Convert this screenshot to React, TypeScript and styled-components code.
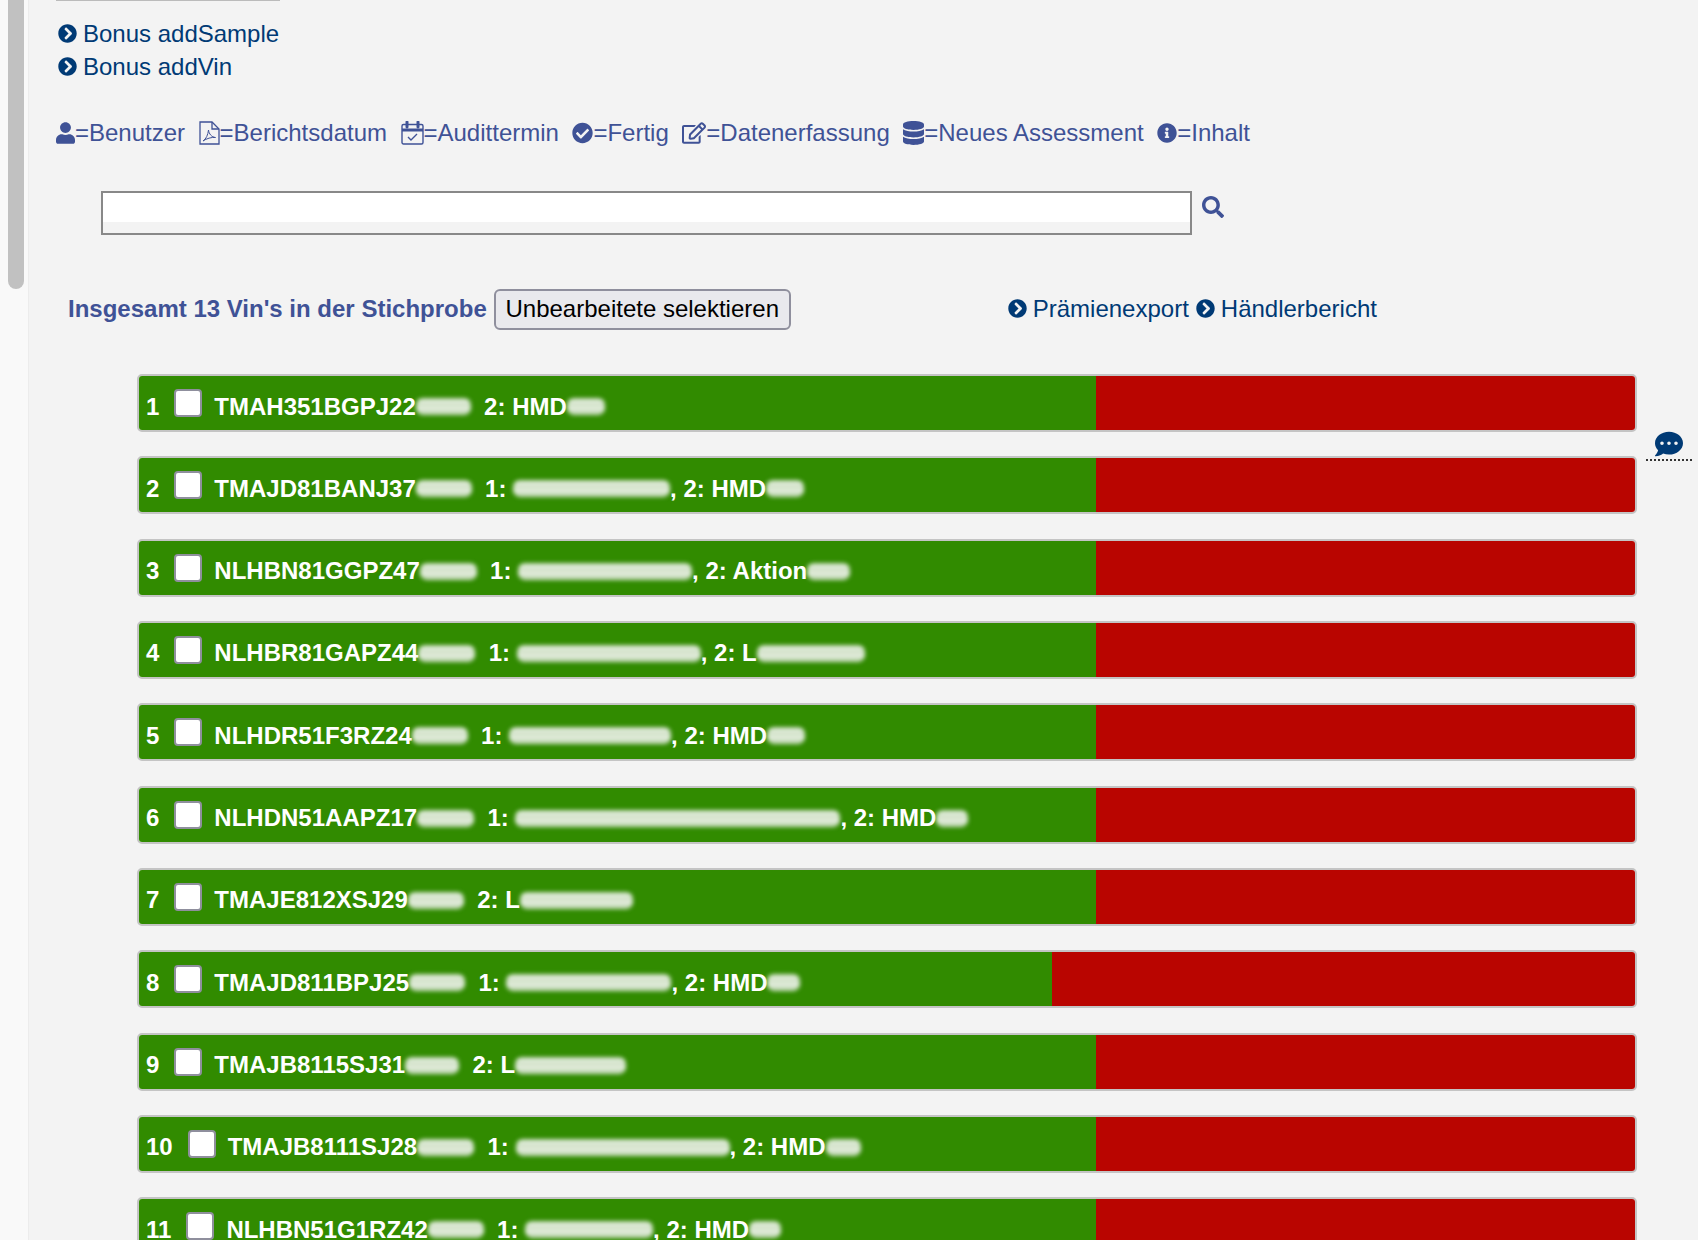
import React from "react";
import styled, { createGlobalStyle } from "styled-components";
import {
  FaChevronCircleRight,
  FaUser,
  FaCheckCircle,
  FaRegEdit,
  FaDatabase,
  FaInfoCircle,
  FaSearch,
  FaCommentDots,
} from "react-icons/fa";

const GlobalStyle = createGlobalStyle`
  html, body {
    margin: 0;
    height: 100%;
    overflow: hidden;
    background: #f3f3f3;
    font-family: "Liberation Sans", Arial, sans-serif;
  }
`;

const Page = styled.div`
  display: flex;
  height: 1240px;
  overflow: hidden;
  position: relative;
`;

const ScrollTrack = styled.div`
  flex: 0 0 29px;
  box-sizing: border-box;
  padding-left: 8px;
  background: #f9f9f9;
  border-right: 1px solid #ececec;
`;

const ScrollThumb = styled.div`
  width: 16px;
  height: 289px;
  background: #c1c1c1;
  border-radius: 0 0 8px 8px;
`;

const Main = styled.main`
  flex: 1;
  min-width: 0;
`;

const TopRule = styled.div`
  width: 224px;
  height: 1px;
  margin-left: 27px;
  background: #bbb;
`;

const LinkList = styled.div`
  margin: 16px 0 0 29px;
`;

const BlueLink = styled.a`
  display: inline-flex;
  align-items: center;
  gap: 6px;
  color: #003a75;
  font-size: 24px;
  line-height: 33px;
  white-space: nowrap;

  svg {
    width: 19px;
    height: 19px;
  }
`;

const LinkRow = styled.div`
  height: 33px;
`;

const Legend = styled.div`
  display: flex;
  gap: 13.5px;
  margin: 33px 0 0 27px;
  color: #3f5296;
  font-size: 24px;
  line-height: 33px;
`;

const LegendItem = styled.span`
  display: inline-flex;
  align-items: center;
  white-space: nowrap;
`;

const LegendIcon = styled.span<{ $w: number }>`
  display: inline-flex;
  justify-content: center;
  width: ${(p) => p.$w}px;

  svg {
    width: ${(p) => p.$w}px;
    height: 24px;
  }
`;

const SearchRow = styled.div`
  display: flex;
  margin: 42px 0 0 72px;
`;

const SearchBox = styled.div`
  width: 1091px;
  height: 44px;
  box-sizing: border-box;
  border: 2px solid #888;
`;

const SearchInput = styled.input`
  display: block;
  width: 100%;
  height: 29px;
  box-sizing: border-box;
  border: 0;
  padding: 0;
  background: #fff;
`;

const SearchIcon = styled(FaSearch)`
  width: 22px;
  height: 22px;
  margin: 5px 0 0 10px;
  color: #3f5296;
`;

const SummaryRow = styled.div`
  display: flex;
  align-items: center;
  height: 41px;
  margin: 54px 0 0 39px;
`;

const Total = styled.strong`
  padding-bottom: 2px;
  color: #3f5296;
  font-size: 24px;
  white-space: nowrap;
`;

const SelectButton = styled.button`
  width: 297px;
  height: 41px;
  margin-left: 7px;
  box-sizing: border-box;
  padding: 0 0 2px;
  border: 2px solid #8f8f9d;
  border-radius: 6px;
  background: #e9e9ed;
  color: #000;
  font: 24px "Liberation Sans", Arial, sans-serif;
`;

const ExportLinks = styled.div`
  display: flex;
  gap: 7px;
  margin-left: 217px;
  padding-bottom: 2px;
`;

const RowList = styled.div`
  margin: 44px 0 0 108px;
  width: 1500px;
`;

const Row = styled.div`
  display: flex;
  height: 58px;
  margin-bottom: 24.33px;
  box-sizing: border-box;
  border: 2px solid #c4c4c4;
  border-radius: 5px;
  overflow: hidden;
`;

const Done = styled.div<{ $pct: number }>`
  display: flex;
  align-items: center;
  flex: 0 0 ${(p) => p.$pct}%;
  box-sizing: border-box;
  padding-left: 7px;
  background: #318b00;
  color: #fff;
  font-size: 24px;
  font-weight: 700;
  white-space: nowrap;
`;

const Open = styled.div`
  flex: 1;
  background: #b90500;
`;

const RowNumber = styled.span`
  padding-top: 7px;
`;

const RowCheck = styled.span`
  display: block;
  flex: none;
  width: 28px;
  height: 28px;
  margin: 0 12px 0 15px;
  box-sizing: border-box;
  border: 2px solid #8f8f9d;
  border-radius: 4px;
  background: #fff;
`;

const RowText = styled.span`
  display: inline-flex;
  align-items: center;
  padding-top: 7px;
  white-space: pre;
`;

const Smudge = styled.span<{ $w: number }>`
  display: inline-block;
  width: ${(p) => p.$w}px;
  height: 17px;
  border-radius: 7px;
  background: linear-gradient(
    #b7d1a8 0,
    #eef4ea 22%,
    #c4d9b8 40%,
    #f0f5ec 62%,
    #bdd4af 82%,
    #d8e6cf 100%
  );
  filter: blur(2.2px);
`;

const CommentMark = styled.div`
  position: absolute;
  left: 1646px;
  top: 430px;
  width: 46px;
  height: 29px;
  border-bottom: 2px dotted #333;
  text-align: center;
  color: #003a75;

  svg {
    width: 32px;
    height: 28px;
  }
`;

const PdfIcon = () => (
  <svg viewBox="0 0 21 24" fill="none" stroke="currentColor" strokeWidth="1.3">
    <path d="M1 1h12l7 7v15H1z" />
    <path d="M13 1v7h7" />
    <path d="M4 20c3-2 5-6 5.5-11 .5 4 3 7 7 7.500-4-.5-9 1-12.500 3.500z" strokeWidth="1" />
  </svg>
);

const CalendarIcon = () => (
  <svg viewBox="0 0 23 24" fill="none" stroke="currentColor" strokeWidth="1.4">
    <rect x="1" y="3.500" width="21" height="19.500" rx="1.500" />
    <path d="M1 9h21" strokeWidth="3" />
    <path d="M6 1v5M17 1v5" strokeWidth="3" strokeLinecap="round" />
    <path d="M7 16l3 3 6-6" />
  </svg>
);

type Part = string | number;

// strings are plain text, numbers are blurred-out stretches with that width
const rows: { vin: string; pct: number; parts: Part[] }[] = [
  { vin: "TMAH351BGPJ22", pct: 64, parts: [55, "  2: HMD", 38] },
  { vin: "TMAJD81BANJ37", pct: 64, parts: [56, "  1: ", 157, ", 2: HMD", 38] },
  { vin: "NLHBN81GGPZ47", pct: 64, parts: [57, "  1: ", 174, ", 2: Aktion", 43] },
  { vin: "NLHBR81GAPZ44", pct: 64, parts: [57, "  1: ", 184, ", 2: L", 108] },
  { vin: "NLHDR51F3RZ24", pct: 64, parts: [56, "  1: ", 162, ", 2: HMD", 38] },
  { vin: "NLHDN51AAPZ17", pct: 64, parts: [57, "  1: ", 325, ", 2: HMD", 32] },
  { vin: "TMAJE812XSJ29", pct: 64, parts: [56, "  2: L", 113] },
  { vin: "TMAJD811BPJ25", pct: 61, parts: [56, "  1: ", 165, ", 2: HMD", 33] },
  { vin: "TMAJB8115SJ31", pct: 64, parts: [54, "  2: L", 111] },
  { vin: "TMAJB8111SJ28", pct: 64, parts: [57, "  1: ", 214, ", 2: HMD", 35] },
  { vin: "NLHBN51G1RZ42", pct: 64, parts: [56, "  1: ", 128, ", 2: HMD", 32] },
];

const legend: { icon: React.ReactNode; w: number; label: string }[] = [
  { icon: <FaUser />, w: 19, label: "=Benutzer" },
  { icon: <PdfIcon />, w: 21, label: "=Berichtsdatum" },
  { icon: <CalendarIcon />, w: 23, label: "=Audittermin" },
  { icon: <FaCheckCircle />, w: 21, label: "=Fertig" },
  { icon: <FaRegEdit />, w: 24, label: "=Datenerfassung" },
  { icon: <FaDatabase />, w: 21, label: "=Neues Assessment" },
  { icon: <FaInfoCircle />, w: 20, label: "=Inhalt" },
];

const App: React.FC = () => {
  return (
    <Page>
      <GlobalStyle />
      <ScrollTrack>
        <ScrollThumb />
      </ScrollTrack>
      <Main>
        <TopRule />
        <LinkList>
          <LinkRow>
            <BlueLink>
              <FaChevronCircleRight /> Bonus addSample
            </BlueLink>
          </LinkRow>
          <LinkRow>
            <BlueLink>
              <FaChevronCircleRight /> Bonus addVin
            </BlueLink>
          </LinkRow>
        </LinkList>
        <Legend>
          {legend.map((item) => (
            <LegendItem key={item.label}>
              <LegendIcon $w={item.w}>{item.icon}</LegendIcon>
              {item.label}
            </LegendItem>
          ))}
        </Legend>
        <SearchRow>
          <SearchBox>
            <SearchInput />
          </SearchBox>
          <SearchIcon />
        </SearchRow>
        <SummaryRow>
          <Total>Insgesamt 13 Vin's in der Stichprobe</Total>
          <SelectButton>Unbearbeitete selektieren</SelectButton>
          <ExportLinks>
            <BlueLink>
              <FaChevronCircleRight /> Prämienexport
            </BlueLink>
            <BlueLink>
              <FaChevronCircleRight /> Händlerbericht
            </BlueLink>
          </ExportLinks>
        </SummaryRow>
        <RowList>
          {rows.map((row, i) => (
            <Row key={row.vin}>
              <Done $pct={row.pct}>
                <RowNumber>{i + 1}</RowNumber>
                <RowCheck />
                <RowText>
                  {row.vin}
                  {row.parts.map((part, j) =>
                    typeof part === "number" ? (
                      <Smudge key={j} $w={part} />
                    ) : (
                      <span key={j}>{part}</span>
                    ),
                  )}
                </RowText>
              </Done>
              <Open />
            </Row>
          ))}
        </RowList>
      </Main>
      <CommentMark>
        <FaCommentDots />
      </CommentMark>
    </Page>
  );
};

export default App;
